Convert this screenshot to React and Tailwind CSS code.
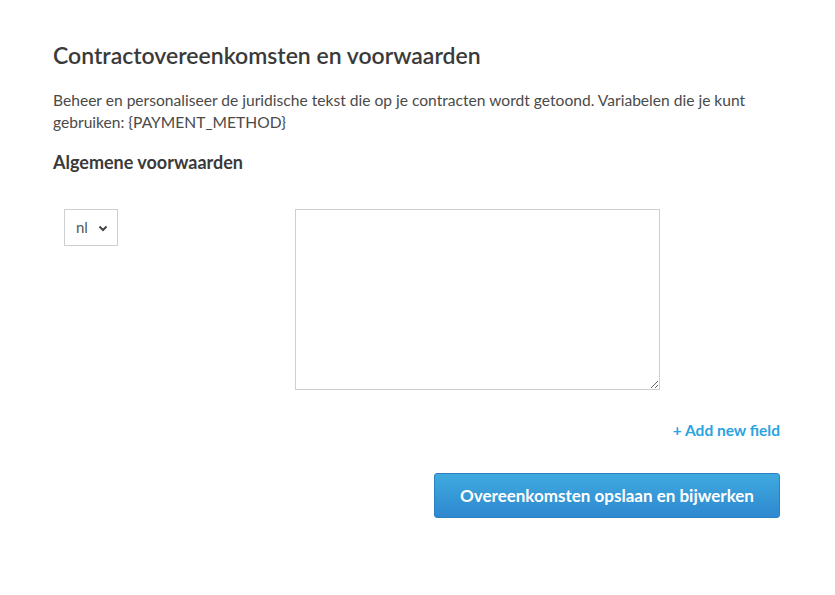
import React from "react";

const DESC = "Beheer en personaliseer de juridische tekst die op je contracten wordt getoond. Variabelen die je kunt gebruiken: {PAYMENT_METHOD}";

export default function App() {
  return (
    <div className="min-h-[595px] w-full bg-white" style={{ fontFamily: "Lato, 'Open Sans', sans-serif" }}>
      <div className="pl-[53px] pt-[40px] w-[780px]">
        <h1 className="text-[23px] font-semibold text-[#3a3a3a] leading-[30px]">Contractovereenkomsten en voorwaarden</h1>
        <p className="mt-[19px] text-[15.6px] leading-[22px] text-[#4a4a4a]">{DESC}</p>
        <h2 className="mt-[17px] text-[18px] font-bold leading-[24px] text-[#3a3a3a]">Algemene voorwaarden</h2>
        <div className="mt-[35px] flex">
          <div className="w-[242px] pl-[11px]">
            <div className="flex h-[37px] w-[54px] items-center gap-[10px] border border-[#cfcfcf] pl-[11px] text-[15px] text-[#555]">
              <span>nl</span>
              <svg width="10" height="7" viewBox="0 0 10 7" className="mt-[1px]">
                <path d="M1.5 1.5 L5 5 L8.5 1.5" stroke="#444" strokeWidth="2" fill="none" />
              </svg>
            </div>
          </div>
          <textarea className="h-[181px] w-[365px] border border-[#cfcfcf] outline-none" />
        </div>
        <div className="mt-[29px] flex justify-end">
          <span className="text-[15.5px] font-bold text-[#2ba3df]">+ Add new field</span>
        </div>
        <div className="mt-[31px] flex justify-end">
          <button className="h-[45px] w-[346px] rounded-[3px] border border-[#2b80c2] bg-gradient-to-b from-[#3faadf] to-[#2f88cf] text-[17px] font-bold text-white">
            Overeenkomsten opslaan en bijwerken
          </button>
        </div>
      </div>
    </div>
  );
}
